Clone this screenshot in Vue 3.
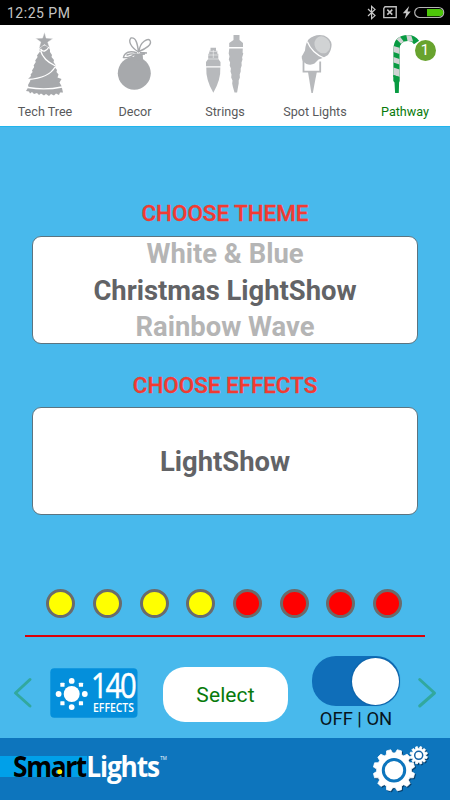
<script setup>
const tabs = [
  { id: 'tree', label: 'Tech Tree' },
  { id: 'decor', label: 'Decor' },
  { id: 'strings', label: 'Strings' },
  { id: 'spot', label: 'Spot Lights' },
  { id: 'path', label: 'Pathway', active: true, badge: 1 },
]
const themes = ['White & Blue', 'Christmas LightShow', 'Rainbow Wave']
const lights = ['yellow', 'yellow', 'yellow', 'yellow', 'red', 'red', 'red', 'red']

function gear(cx, cy, inner, outer, teeth) {
  const step = (Math.PI * 2) / teeth
  const pt = (r, a) => `${(cx + r * Math.cos(a)).toFixed(2)} ${(cy + r * Math.sin(a)).toFixed(2)}`
  let d = ''
  for (let i = 0; i < teeth; i++) {
    const a = i * step + step / 2
    d += `${i ? 'L' : 'M'}${pt(inner, a - step * 0.36)}L${pt(outer, a - step * 0.2)}L${pt(outer, a + step * 0.2)}L${pt(inner, a + step * 0.36)}`
  }
  return d + 'Z'
}
const bigGear = gear(24, 32.3, 17.4, 20.8, 12)
const smallGear = gear(48.7, 17.3, 6.9, 8.8, 12)
const rays = Array.from({ length: 8 }, (_, i) => {
  const a = (i * Math.PI) / 4
  const r = 13.1
  return { x: 21.7 + r * Math.cos(a), y: 26 + r * Math.sin(a), square: i % 2 === 1 }
})
</script>

<template>
  <div class="screen">
    <header class="status">
      <span class="clock">12:25 PM</span>
      <svg class="status-icons" width="80" height="25" viewBox="0 0 80 25">
        <path d="M3 9l7 6.6-3.4 3V6.4l3.4 3L3 16" fill="none" stroke="#c8c8c8" stroke-width="1.2" />
        <path d="M20 6.8h11.2v10.8H18.8V8.4z" fill="none" stroke="#c0c0c0" stroke-width="1.4" />
        <path d="M22.3 9.6l5 5M27.3 9.6l-5 5" stroke="#c8c8c8" stroke-width="1.5" />
        <path d="M44.2 6l-6.4 7.3h3.4l-1.5 5.6 6-7.3h-3.2z" fill="#c8c8c8" />
        <rect x="49.7" y="7.5" width="29" height="10" rx="5" fill="#000" stroke="#b4b4b4" stroke-width="1.2" />
        <path d="M62 8.9h12.5a3.7 3.7 0 0 1 0 7.4H62z" fill="#4dc709" />
      </svg>
    </header>

    <nav class="tabs">
      <div v-for="tab in tabs" :key="tab.id" class="tab" :class="{ active: tab.active }">
        <svg v-if="tab.id === 'tree'" class="tab-icon" viewBox="0 25 90 75">
          <path d="M41 46L39.5 50 40 51.5 37 55.5 37.6 57 35.2 60.5 35.8 62 33.6 65.5 34.2 67 32 70.5 32.6 72 30.6 74.5 31 76 28 79 30.5 80.5 28 85 28.5 87 26 91 29 91.5 30 93.5 32 92 34 94 37 93 39 95 41 93.5 44 95.5 46 94 49 96 51 94 54 95.5 56 93.5 59 95 60 92.5 63 92.5 61.5 86 59.5 82.5 61.5 79 57.5 77.5 58.5 74.5 56.5 72 57 70 55 67.5 55.5 65 53.5 62 54 60 51.5 57 52 55 50 52 50 50 48 45z" fill="#a7a9ac" />
          <path d="M44.5 32l1.7 6.1 7 .3-5.4 3.8 2.1 6.3-5.4-3.9-5.6 4.2 1.8-6.8-5.2-3.7 7-.2z" fill="#a7a9ac" stroke="#fff" stroke-width=".5" />
          <path d="M40.5 49q4 5 8.5-2M40.5 50.5q2.5 9.5 15 15.5M55 67q-6 11-27 12.5M28 87.5q17 3 34-.5" fill="none" stroke="#fff" stroke-width="1.3" />
        </svg>
        <svg v-else-if="tab.id === 'decor'" class="tab-icon" viewBox="0 25 90 75">
          <circle cx="44.3" cy="73.2" r="16.5" fill="#a7a9ac" />
          <path d="M44 60l.3-6.4h8.3l.6 8z" fill="#a7a9ac" />
          <path d="M48.5 52c-8-5-10.5-11-7.5-14 5-1 6.5 6 7.5 14zM49 51.5c1-10 9-13.500 11-11 2.500 4-4 8-11 11zM47 53c-7-3-12.500-.5-13.500 4.500 5 .5 9-1.200 11-3.200-4-1.300-6 .5-8 1M50 52.500l7 .5M49 54.500l6-.5" fill="none" stroke="#a7a9ac" stroke-width="1.4" />
        </svg>
        <svg v-else-if="tab.id === 'strings'" class="tab-icon" viewBox="0 25 90 75">
          <path d="M30.500 47.700h5.500v3h1.300v3h1v5.300l2.200 3v4.300H26V62l2.200-3v-5.300h1v-3h1.300z" fill="#b7b9bc" />
          <path d="M26.300 67.500h14q.7 12-7 25.300-7.700-13.300-7-25.300z" fill="#b7b9bc" />
          <path d="M29 51.400h8M28 55h10M28 59h10M33.300 50v8" stroke="#fff" stroke-width=".5" />
          <path d="M53.500 35h6v5l3.500 3v4H49.200v-4l4.300-3z" fill="#b7b9bc" />
          <path d="M49.300 48.500h13.500l-.2 4 .7 1-1.200 4 .4 2-1 3 .2 3-1 3v3l-1 3 .2 3-1.200 3v3l-.6 3-1 6H54.500l-1.700-6-.6-3 .3-3-1.300-3 .3-3-1-3 .4-3-1.200-3 .4-3-1.300-3 .7-3-.8-3z" fill="#b7b9bc" />
        </svg>
        <svg v-else-if="tab.id === 'spot'" class="tab-icon" viewBox="0 25 90 75">
          <path d="M38.500 39.500Q45 33.500 54 35.500q7 3 7.600 9 0 5.500-3.600 10.500-4.500 3-9.500 4.500l-4 4q-3.500 2-8 .5-5-2.500-4.800-7.500 1.800-3 3.300-6 .5-7 3.500-11z" fill="#b7b9bc" />
          <path d="M37.300 41.500q4.700 12 17.700 17" fill="none" stroke="#fff" stroke-width="1.3" />
          <ellipse cx="52.300" cy="44.800" rx="7.600" ry="8.800" transform="rotate(-30 52.300 44.800)" fill="#d1d3d4" />
          <path d="M33.500 60v11.600h16.700V61.500" fill="none" stroke="#b7b9bc" stroke-width="1.800" />
          <path d="M38 72h8.800l-4 21h-1.400z" fill="#b7b9bc" />
        </svg>
        <svg v-else class="tab-icon" viewBox="0 25 90 75">
          <path class="cane" d="M36.500 77V49.500Q36.500 38.200 48 38q5.500 0 8.500 4.500" />
          <path d="M33.500 46l6 1.800V54l-6-2zM33.500 57l6 2v5.500l-6-2zM33.500 67.500l6 2V77l-6-2zM36.500 39.200l3.500-2.500 3.800 4.800-2.800 2.300zM46.300 35l5 .4 1.800 6-5.600-.4z" fill="#d1d3d4" />
          <path d="M33.300 75l6.400 2v4l-.6 1.500L38.800 93h-3.700l-.6-10.500-1.200-1.500z" fill="#089b42" />
        </svg>
        <span class="tab-label">{{ tab.label }}</span>
        <span v-if="tab.badge" class="badge">{{ tab.badge }}</span>
      </div>
    </nav>

    <main class="content">
      <h2 class="heading theme-heading">CHOOSE THEME</h2>
      <section class="picker">
        <div v-for="(theme, i) in themes" :key="theme" class="option" :class="{ selected: i === 1 }">{{ theme }}</div>
      </section>
      <h2 class="heading effects-heading">CHOOSE EFFECTS</h2>
      <section class="picker">
        <div class="option selected">LightShow</div>
      </section>

      <div class="lights">
        <span v-for="(c, i) in lights" :key="i" class="light" :class="c"></span>
      </div>
      <div class="rule"></div>

      <div class="controls">
        <svg class="arrow" width="20" height="32" viewBox="0 0 20 32">
          <path d="M17 2.500L2.500 16 17 29" />
        </svg>
        <svg class="effects" width="88" height="50" viewBox="0 0 88 50">
          <rect x=".3" y=".3" width="87.2" height="49.4" rx="4" fill="#048fdb" />
          <circle cx="21.7" cy="26" r="8" fill="#fff" />
          <template v-for="(r, i) in rays" :key="i">
            <rect v-if="r.square" :x="r.x - 2.1" :y="r.y - 2.1" width="4.2" height="4.2" rx=".7" fill="#fff" />
            <circle v-else :cx="r.x" :cy="r.y" r="2.9" fill="#fff" />
          </template>
          <text class="num" transform="translate(41 29.8) scale(.86 1)">140</text>
          <text class="word" x="43" y="44.3" textLength="41" lengthAdjust="spacingAndGlyphs">EFFECTS</text>
        </svg>
        <button class="select">Select</button>
        <div class="switch-group">
          <div class="switch"><span class="knob"></span></div>
          <span class="switch-label">OFF | ON</span>
        </div>
        <svg class="arrow" width="20" height="32" viewBox="0 0 20 32">
          <path d="M2.700 2.500L17.500 16 2.700 29" />
        </svg>
      </div>
    </main>

    <footer class="footer">
      <svg width="175" height="62" viewBox="0 0 175 62">
        <rect y="18" width="87" height="21" fill="#00a0e9" />
        <text class="brand" transform="translate(13 38.7) scale(.94 1)" textLength="79" fill="#000">Smart</text>
        <text class="brand" transform="translate(86.3 38.7) scale(.94 1)" textLength="78.5" fill="#fff">Lights</text>
        <circle cx="59.7" cy="33.7" r="2.5" fill="#ffed00" />
        <text class="tm" x="160.2" y="21.5" textLength="6.5" lengthAdjust="spacingAndGlyphs">TM</text>
      </svg>
      <svg class="gears" width="60" height="62" viewBox="0 0 60 62">
        <g class="gear">
          <path :d="bigGear" />
          <path :d="smallGear" />
        </g>
        <circle cx="24" cy="32.3" r="10.7" fill="#fff" stroke="#0d75bd" stroke-width="3" />
        <circle cx="48.7" cy="17.3" r="4" fill="#fff" stroke="#1662a5" stroke-width="1.5" />
      </svg>
    </footer>
  </div>
</template>

<style>
body { margin: 0; }
</style>

<style scoped>
.screen { width: 450px; height: 800px; display: flex; flex-direction: column; overflow: hidden; background: #48b9ec; font-family: Roboto, "Liberation Sans", sans-serif; }
.status { height: 25px; flex: none; display: flex; align-items: center; justify-content: space-between; background: #000; padding-right: 5px; padding-left: 7px; }
.clock { color: #c4c4c4; font-size: 14px; line-height: 25px; letter-spacing: .5px; padding-top: 1px; }
.tabs { height: 101px; flex: none; display: grid; grid-template-columns: repeat(5, 90px); background: #fff; box-shadow: 0 1px 0 #20b5ed; }
.tab { position: relative; display: flex; flex-direction: column; align-items: center; color: #58595b; }
.tab-icon { width: 90px; height: 75px; flex: none; }
.tab-label { font-size: 12.6px; line-height: 23px; }
.active { color: #087a0b; }
.cane { fill: none; stroke: #089b42; stroke-width: 6.2; }
.badge { position: absolute; left: 54.5px; top: 14.5px; width: 21px; height: 21px; border-radius: 50%; background: #68a32e; color: #fff; font-size: 15px; line-height: 21px; text-align: center; }
.content { flex: 1; display: flex; flex-direction: column; align-items: center; }
.heading { margin: 0; height: 28px; line-height: 28px; font-size: 22.4px; font-weight: 500; color: #f23a32; -webkit-text-stroke: .3px #f23a32; }
.theme-heading { padding-top: 73px; margin-bottom: 9px; }
.effects-heading { padding-top: 27px; margin-bottom: 8.4px; }
.picker { box-sizing: border-box; width: 386px; height: 108px; flex: none; border: 1px solid #5c7480; border-radius: 9px; background: #fff; display: flex; flex-direction: column; align-items: center; justify-content: center; }
.option { height: 36.7px; line-height: 38px; font-size: 27.4px; font-weight: 700; color: #b5b5b5; }
.selected { color: #626366; }
.lights { width: 355.6px; display: flex; justify-content: space-between; margin-top: 73.3px; margin-left: -1.8px; }
.light { box-sizing: border-box; width: 29px; height: 29px; border: 3px solid #6b6b6b; border-radius: 50%; }
.yellow { background: #ff0; }
.red { background: #f00; }
.rule { width: 400px; height: 2px; margin-top: 17.3px; background: #dc0008; flex: none; }
.controls { width: 450px; height: 101px; display: grid; grid-template-columns: 50px 113px 149px 106px 32px; }
.arrow { margin-top: 40px; margin-left: 13px; }
.arrow:last-child { margin-left: -1px; }
.arrow path { fill: none; stroke: #32a89e; stroke-width: 3; stroke-linecap: round; stroke-linejoin: round; }
.effects { margin-top: 31px; overflow: visible; }
.num { font-family: "Open Sans", sans-serif; font-size: 34px; letter-spacing: -2.5px; fill: #fff; stroke: #fff; stroke-width: .5px; }
.word { font-family: "Open Sans", sans-serif; font-size: 12px; font-weight: 600; fill: #fff; }
.select { margin: 30.5px 0 0; padding: 0; width: 125px; height: 55px; border: 0; border-radius: 22px; background: #fff; color: #087a0b; font: 21px Roboto, sans-serif; letter-spacing: .1px; }
.switch-group { width: 88px; margin-top: 19.5px; display: flex; flex-direction: column; align-items: center; }
.switch { width: 88px; height: 50px; border-radius: 24px; background: #0f6eb9; display: flex; justify-content: flex-end; align-items: center; }
.knob { width: 47px; height: 47px; margin-right: 1px; border-radius: 50%; background: #fff; box-shadow: 0 0 2px #004b87; }
.switch-label { font-size: 18.4px; line-height: 26px; color: #07151d; }
.footer { height: 62px; flex: none; display: flex; justify-content: space-between; background: #0d75bd; }
.footer svg { flex: none; }
.brand { font-family: "Open Sans", sans-serif; font-size: 28px; font-weight: 700; }
.tm { font-family: "Open Sans", sans-serif; font-size: 5px; fill: #fff; }
.gears { margin-right: 20px; }
.gear { fill: #fff; stroke: #fff; stroke-width: .8; stroke-linejoin: round; filter: drop-shadow(1px 1.5px .7px #043c69); }
</style>
